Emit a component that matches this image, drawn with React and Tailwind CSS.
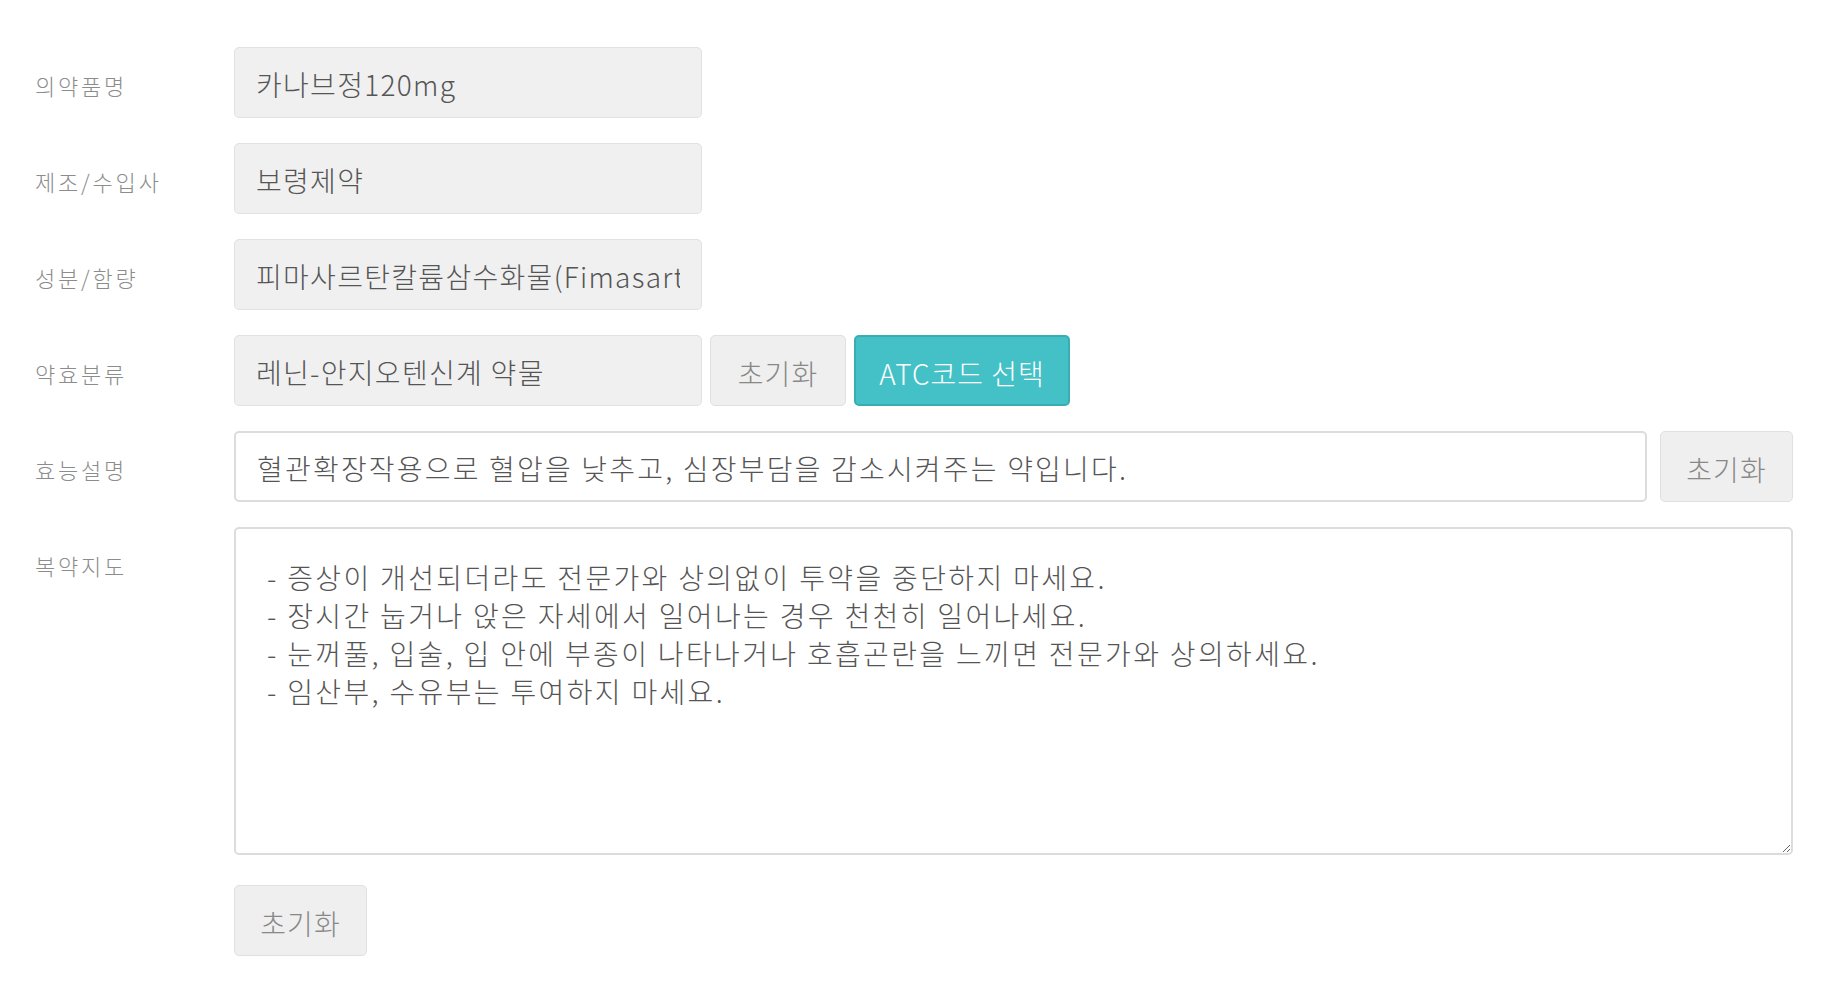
const font = { fontFamily: '"Noto Sans CJK KR", "Noto Sans", sans-serif' };

const grayField =
  'h-[71px] rounded-[5px] border border-[#e2e2e2] bg-[#f0f0f0] px-[21px] pt-[2px] text-[28px] font-light tracking-[1.3px] text-[#555] outline-none';
const resetBtn =
  'h-[71px] rounded-[5px] border border-[#e0e0e0] bg-[#efefef] pt-[5px] text-[28px] font-light tracking-[1px] text-[#888]';

function Row({ label, children, className = '' }) {
  return (
    <div className={`flex ${className}`}>
      <div className="w-[199px] shrink-0 pt-[24px] text-[22px] font-light leading-[28px] tracking-[2.8px] text-[#8c8c8c]">
        {label}
      </div>
      <div className="flex flex-1 gap-2">{children}</div>
    </div>
  );
}

export default function App() {
  const guide = [
    '- 증상이 개선되더라도 전문가와 상의없이 투약을 중단하지 마세요.',
    '- 장시간 눕거나 앉은 자세에서 일어나는 경우 천천히 일어나세요.',
    '- 눈꺼풀, 입술, 입 안에 부종이 나타나거나 호흡곤란을 느끼면 전문가와 상의하세요.',
    '- 임산부, 수유부는 투여하지 마세요.',
  ].join('\n');

  return (
    <div style={font} className="min-h-[992px] bg-white pt-[47px] pr-[35px] pl-[35px]">
      <div className="flex flex-col gap-[25px]">
        <Row label="의약품명">
          <input readOnly value="카나브정120mg" className={`${grayField} w-[468px]`} />
        </Row>
        <Row label="제조/수입사">
          <input readOnly value="보령제약" className={`${grayField} w-[468px]`} />
        </Row>
        <Row label="성분/함량">
          <input
            readOnly
            value="피마사르탄칼륨삼수화물(Fimasartan Potassium Trihydrate) 132.83mg"
            className={`${grayField} w-[468px]`}
          />
        </Row>
        <Row label="약효분류">
          <input readOnly value="레닌-안지오텐신계 약물" className={`${grayField} w-[468px]`} />
          <button className={`${resetBtn} w-[136px]`}>초기화</button>
          <button className="h-[71px] w-[216px] rounded-[5px] border-2 border-[#38aeb3] bg-[#44c1c6] pt-[4px] text-[28px] font-light tracking-[1px] text-white">
            ATC코드 선택
          </button>
        </Row>
        <Row label="효능설명">
          <div className="flex flex-1 gap-[13px]">
            <input
              readOnly
              value="혈관확장작용으로 혈압을 낮추고, 심장부담을 감소시켜주는 약입니다."
              className="h-[71px] flex-1 rounded-[5px] border-2 border-[#dcdcdc] bg-white px-[21px] pt-[2px] text-[28px] font-light tracking-[2.2px] text-[#555] outline-none"
            />
            <button className={`${resetBtn} w-[133px]`}>초기화</button>
          </div>
        </Row>
        <Row label="복약지도">
          <textarea
            readOnly
            value={guide}
            className="h-[328px] flex-1 rounded-[5px] border-2 border-[#dcdcdc] bg-white pt-[29px] pl-[31px] pr-[21px] text-[28px] font-light leading-[38px] tracking-[2.35px] text-[#555] outline-none"
          />
        </Row>
      </div>
      <div className="mt-[30px] pl-[199px]">
        <button className={`${resetBtn} w-[133px]`}>초기화</button>
      </div>
    </div>
  );
}
